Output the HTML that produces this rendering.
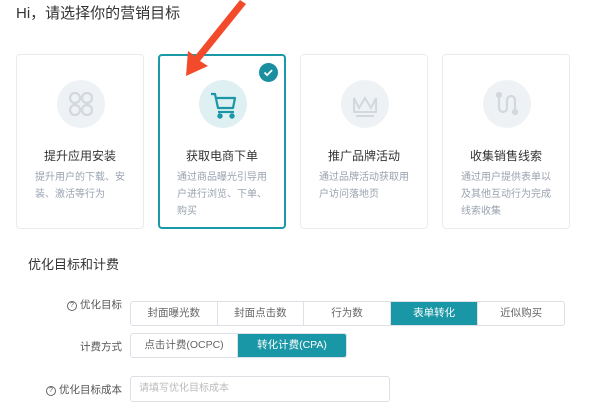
<!DOCTYPE html>
<html><head><meta charset="utf-8"><style>
*{margin:0;padding:0;box-sizing:border-box}
body{width:612px;height:413px;overflow:hidden;background:#fff;font-family:"Liberation Sans","Noto Sans CJK SC",sans-serif;position:relative;color:#333}
.abs{position:absolute}
.card{position:absolute;top:54px;width:128px;height:175px;border:1px solid #e8ebef;border-radius:4px}
.card.sel{border:2px solid #1a9aa8}
.circ{position:absolute;left:40px;top:25px;width:48px;height:48px;border-radius:50%;background:#eff2f5}
.ct{position:absolute;top:92px;left:0;width:100%;text-align:center;font-size:12px;color:#333}
.cd{position:absolute;top:114px;left:18px;width:96px;font-size:10px;line-height:17px;color:#9aa3b0}
.seg{position:absolute;height:25px;border:1px solid #dde1e6;display:flex;border-radius:3px;overflow:hidden}
.seg div{border-right:1px solid #dde1e6;text-align:center;font-size:10.5px;line-height:23px;color:#666}
.seg div:last-child{border-right:none}
.seg .on{background:#1a97a6;color:#fff}
.lbl{position:absolute;font-size:10.5px;color:#555;text-align:right}
.q{display:inline-block;width:10px;height:10px;border:1px solid #666;border-radius:50%;font-size:7px;line-height:8px;text-align:center;vertical-align:1px;margin-right:3px}
</style></head><body>
<div class="abs" style="left:16px;top:2px;font-size:15px;color:#333">Hi，请选择你的营销目标</div>

<div class="card" style="left:16px">
<div class="circ"><svg width="48" height="48" viewBox="0 0 48 48" fill="none" stroke="#d3d8de" stroke-width="2.2"><rect x="13" y="13" width="10" height="10" rx="5"/><rect x="25" y="13" width="10" height="10" rx="5"/><rect x="13" y="25" width="10" height="10" rx="5"/><rect x="25" y="25" width="10" height="10" rx="5"/></svg></div>
<div class="ct">提升应用安装</div><div class="cd">提升用户的下载、安装、激活等行为</div></div>

<div class="card sel" style="left:158px">
<div class="circ" style="left:39px;top:24px;background:#dff0f2"><svg width="48" height="48" viewBox="0 0 48 48" fill="none" stroke="#1a97a6" stroke-width="2.2" stroke-linejoin="round"><path d="M12 14h4l3 14h15l2-10H17"/><path d="M19 32h16"/><circle cx="21" cy="36" r="1.6" fill="#1a97a6"/><circle cx="33" cy="36" r="1.6" fill="#1a97a6"/></svg></div>
<div class="ct" style="top:91px">获取电商下单</div><div class="cd" style="top:113px;left:17px">通过商品曝光引导用户进行浏览、下单、购买</div>
<div class="abs" style="left:99px;top:7px;width:19px;height:19px;border-radius:50%;background:#1a8fa0"><svg width="19" height="19" viewBox="0 0 19 19"><path d="M5.5 9.5l2.6 2.6 5-5" fill="none" stroke="#fff" stroke-width="1.8"/></svg></div>
</div>

<div class="card" style="left:300px">
<div class="circ"><svg width="48" height="48" viewBox="0 0 48 48" fill="none" stroke="#d3d8de" stroke-width="2"><path d="M13 18l5 10 6-10 6 10 5-10v14H13z"/><path d="M15 36h18"/></svg></div>
<div class="ct">推广品牌活动</div><div class="cd">通过品牌活动获取用户访问落地页</div></div>

<div class="card" style="left:442px">
<div class="circ"><svg width="48" height="48" viewBox="0 0 48 48" fill="none" stroke="#d3d8de" stroke-width="2.2"><path d="M16 16v12a4 4 0 0 0 8 0v-8a4 4 0 0 1 8 0v11"/><circle cx="16" cy="15" r="2" fill="#d3d8de"/><circle cx="32" cy="32" r="2" fill="#d3d8de"/></svg></div>
<div class="ct">收集销售线索</div><div class="cd">通过用户提供表单以及其他互动行为完成线索收集</div></div>

<svg class="abs" style="left:0;top:0" width="612" height="100"><path d="M246 4L240 0 195 56 188 51 186 76 208 66 200 61z" fill="#f24a2a"/></svg>

<div class="abs" style="left:28px;top:254px;font-size:13px;color:#333">优化目标和计费</div>

<div class="lbl" style="left:40px;width:82px;top:297px"><span class="q">?</span>优化目标</div>
<div class="seg" style="left:130px;top:301px;width:435px"><div style="width:87px">封面曝光数</div><div style="width:87px">封面点击数</div><div style="width:87px">行为数</div><div class="on" style="width:88px">表单转化</div><div style="width:86px">近似购买</div></div>

<div class="lbl" style="left:40px;width:82px;top:339px">计费方式</div>
<div class="seg" style="left:130px;top:333px;width:217px"><div style="width:108px">点击计费(OCPC)</div><div class="on" style="width:109px">转化计费(CPA)</div></div>

<div class="lbl" style="left:20px;width:102px;top:382px"><span class="q">?</span>优化目标成本</div>
<div class="abs" style="left:130px;top:376px;width:260px;height:26px;border:1px solid #dde1e6;border-radius:3px;font-size:10px;color:#bbb;line-height:24px;padding-left:8px">请填写优化目标成本</div>
</body></html>
